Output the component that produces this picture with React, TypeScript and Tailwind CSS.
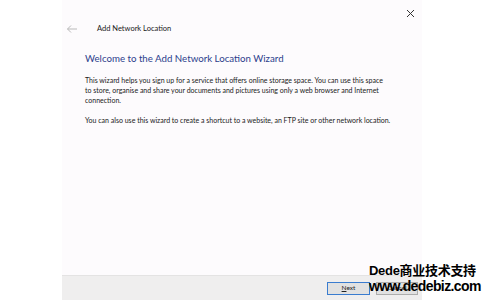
const font = { fontFamily: 'Lato, "Noto Sans", sans-serif' };

export default function App() {
  return (
    <div className="w-[484px] h-[300px] bg-white flex relative overflow-hidden" style={font}>
      <div className="ml-[62px] w-[360px] h-full bg-[#fdfbfd] flex flex-col">
        <div className="flex items-center h-[20px] justify-end pr-[4px] pt-[2px]">
          <svg width="9" height="9" viewBox="0 0 9 9" className="mr-[3px] mt-[4px]">
            <path d="M1 1 L8 8 M8 1 L1 8" stroke="#333" strokeWidth="1" />
          </svg>
        </div>
        <div className="flex items-center h-[18px] pl-[4px]">
          <svg width="12" height="10" viewBox="0 0 12 10">
            <path d="M11 5 H1.5 M5 1.5 L1.5 5 L5 8.5" stroke="#b9b9b9" strokeWidth="1" fill="none" />
          </svg>
          <span className="ml-[19px] text-[7.5px] text-[#1a1a1a]">Add Network Location</span>
        </div>
        <div className="pl-[23px] pr-[10px] pt-[13px] flex-1">
          <h1 className="text-[9.7px] text-[#2c3e8c] leading-[14px]">Welcome to the Add Network Location Wizard</h1>
          <p className="mt-[10px] text-[7px] leading-[10px] text-[#1a1a1a] w-[306px]">
            This wizard helps you sign up for a service that offers online storage space. You can use this space to store, organise and share your documents and pictures using only a web browser and Internet connection.
          </p>
          <p className="mt-[10px] text-[7px] leading-[10px] text-[#1a1a1a]">
            You can also use this wizard to create a shortcut to a website, an FTP site or other network location.
          </p>
        </div>
        <div className="h-[25px] bg-[#efeeee] border-t border-[#e4e3e3] flex items-center justify-end pr-[4px] gap-[6px]">
          <button className="w-[43px] h-[13px] bg-[#e1e1e1] border border-[#3a7ccf] text-[6.5px] text-[#222] leading-none">
            <span className="underline">N</span>ext
          </button>
          <button className="w-[42px] h-[13px] bg-[#e1e1e1] border border-[#adadad] text-[6.5px] text-[#222] leading-none">
            Cancel
          </button>
        </div>
      </div>
      <div
        className="absolute left-[369px] top-[264px] text-black font-bold leading-none"
        style={{ fontFamily: '"Liberation Sans", "Noto Sans CJK SC", sans-serif' }}
      >
        <div className="text-[13px] tracking-[-0.3px]">Dede商业技术支持</div>
        <div className="text-[14px] mt-[2px] tracking-[-0.6px]">www.dedebiz.com</div>
      </div>
    </div>
  );
}
